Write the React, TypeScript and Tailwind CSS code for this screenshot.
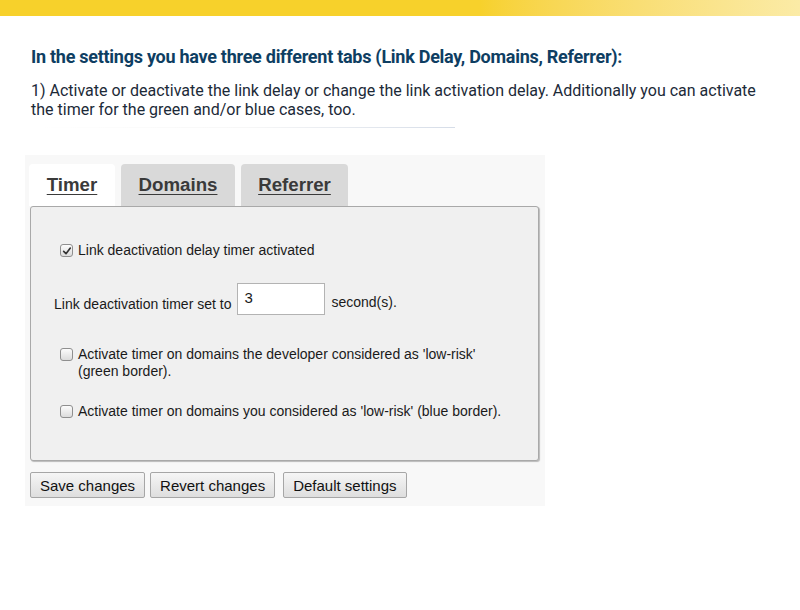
import type { FC } from "react";

const Checkbox: FC<{ checked?: boolean }> = ({ checked }) => (
  <span className="relative mt-[2px] inline-flex h-[13px] w-[13px] shrink-0 items-center justify-center rounded-[3px] border border-[#8f8f8f] bg-gradient-to-b from-[#fcfcfc] to-[#dcdcdc]">
    {checked && (
      <svg viewBox="0 0 12 12" className="h-[10px] w-[10px]">
        <path d="M2 6.5 L4.8 9.2 L10 2.5" fill="none" stroke="#333" strokeWidth="2" strokeLinecap="round" strokeLinejoin="round" />
      </svg>
    )}
  </span>
);

const Tab: FC<{ label: string; width: string; active?: boolean }> = ({ label, width, active }) => (
  <div
    className={
      "flex h-[42px] items-center justify-center rounded-t-[4px] text-[18.7px] font-bold text-[#3a3a3a] underline decoration-[1px] underline-offset-[3px] " +
      width +
      (active ? " bg-white" : " bg-[#d9d9d9]")
    }
  >
    {label}
  </div>
);

const Button: FC<{ label: string }> = ({ label }) => (
  <button className="h-[26px] rounded-[2px] border border-[#a6a6a6] bg-gradient-to-b from-[#f6f6f6] to-[#dedede] px-[9px] text-[15px] leading-none text-[#111]">
    {label}
  </button>
);

export default function App() {
  return (
    <div className="h-[610px] w-[800px] overflow-hidden bg-white">
      <div className="h-[16px] w-full bg-gradient-to-r from-[#f7d12b] from-60% to-[#fbeba6]" />

      <div className="pl-[31px] pt-[28px] font-['Roboto',sans-serif]">
        <h2 className="text-[18px] font-bold leading-[26px] tracking-[-0.015em] text-[#0e3e62]">
          In the settings you have three different tabs (Link Delay, Domains, Referrer):
        </h2>
        <p className="mt-[11px] w-[740px] text-[16px] leading-[19px] text-[#1c2a38]">
          1) Activate or deactivate the link delay or change the link activation delay. Additionally you can activate
          the timer for the green and/or blue cases, too.
        </p>
      </div>

      <div className="ml-[35px] mt-[8px] h-[1px] w-[420px] bg-gradient-to-r from-[#ffffff] via-[#f7f7f7] to-[#d6dde8]" />

      <div className="ml-[25px] mt-[27px] w-[520px] bg-[#f8f8f8] pb-[8px] pl-[4px] pt-[9px] font-['Liberation_Sans',Arial,sans-serif]">
        <div className="flex gap-[6px]">
          <Tab label="Timer" width="w-[86px]" active />
          <Tab label="Domains" width="w-[114px]" />
          <Tab label="Referrer" width="w-[107px]" />
        </div>

        <div className="ml-[1px] w-[509px] rounded-[3px] border border-[#a9a9a9] bg-[#f0f0f0] pb-[40px] pl-[23px] pt-[35px] text-[14px] leading-[17px] text-[#1a1a1a] shadow-[1px_1px_1px_rgba(0,0,0,0.25)]">
          <label className="ml-[6px] flex items-start gap-[5px]">
            <Checkbox checked />
            <span>Link deactivation delay timer activated</span>
          </label>

          <div className="mt-[24px] flex items-center">
            <span className="mt-[11px]">Link deactivation timer set to</span>
            <div className="ml-[6px] flex h-[32px] w-[88px] items-start border border-[#b3b3b3] bg-white pl-[6px] pt-[5px] text-[15px]">
              3
            </div>
            <span className="ml-[6px] mt-[7px]">second(s).</span>
          </div>

          <label className="ml-[6px] mt-[31px] flex items-start gap-[5px]">
            <Checkbox />
            <span>
              Activate timer on domains the developer considered as 'low-risk'
              <br />
              (green border).
            </span>
          </label>

          <label className="ml-[6px] mt-[23px] flex items-start gap-[5px]">
            <Checkbox />
            <span>Activate timer on domains you considered as 'low-risk' (blue border).</span>
          </label>
        </div>

        <div className="mt-[11px] flex gap-[5px] pl-[1px]">
          <Button label="Save changes" />
          <Button label="Revert changes" />
          <div className="ml-[3px]">
            <Button label="Default settings" />
          </div>
        </div>
      </div>
    </div>
  );
}
